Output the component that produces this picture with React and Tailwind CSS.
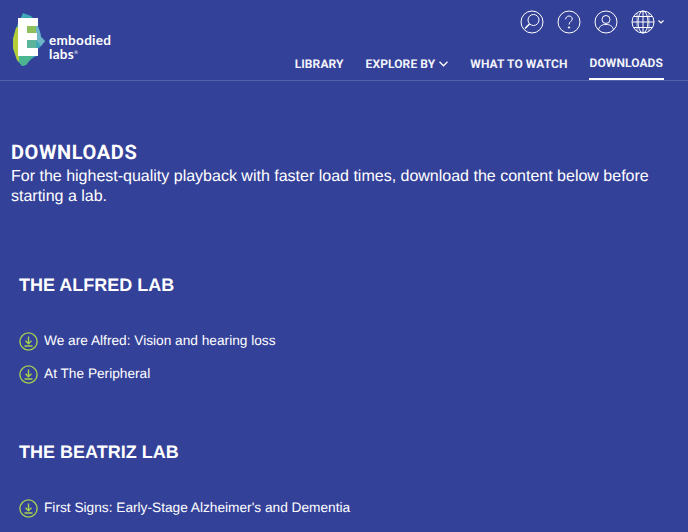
const navFont = { fontFamily: '"Roboto", "Liberation Sans", sans-serif' };

const Logo = () => (
  <div className="flex items-end">
    <svg width="36" height="56" viewBox="0 0 36 56" className="shrink-0">
      <path d="M11 1 L19 4 L24 9 L28 20 L29 25 L33 29 L29 34 L25 38 L24 44 L18 48 L14 53 L10 54 L5 48 L1 36 L1 27 L4 16 Z" fill="#3fa9b8" />
      <path d="M4 16 L1 27 L1 36 L5 48 L7 50 L7 14 Z" fill="#b4cc3a" />
      <path d="M7 44 L7 50 L10 54 L14 53 L18 48 L21 44 Z" fill="#4bb58f" />
      <path d="M14 13 H25 V21 H14 Z" fill="#8fbf5a" />
      <path d="M14 28 H24 V37 H14 Z" fill="#5cb59a" />
      <path d="M24 9 L28 20 L29 25 L33 29 L29 34 L24 28 Z" fill="#6fb5c9" />
      <path d="M6 6 H26 V14 H15 V21 H25 V28 H15 V36 H26 V44 H6 Z" fill="#ffffff" />
    </svg>
    <div className="mb-[7px] ml-[1px] text-[13.5px] leading-[14px] font-bold tracking-[0.3px] text-white" style={{ fontFamily: '"Lato", sans-serif' }}>
      <div>embodied</div>
      <div className="flex">labs<span className="text-[5px] leading-[12px] text-[#c5cce6]">®</span></div>
    </div>
  </div>
);

const Circle = ({ children }) => (
  <svg width="24" height="24" viewBox="0 0 24 24" fill="none" stroke="#ffffff" strokeWidth="1">
    <circle cx="12" cy="12" r="11" />
    {children}
  </svg>
);

const HeaderIcons = () => (
  <div className="flex items-center gap-[13px] pr-[24px]">
    <Circle>
      <circle cx="13.5" cy="10" r="5.5" />
      <path d="M9.5 14 L5 18.5" strokeWidth="1.6" />
    </Circle>
    <Circle>
      <path d="M8.7 9.3 C8.7 7.2 10.2 6 12 6 C13.9 6 15.3 7.2 15.3 9 C15.3 11.3 12 11.6 12 14.5" />
      <circle cx="12" cy="17.5" r="0.7" fill="#ffffff" />
    </Circle>
    <Circle>
      <circle cx="12" cy="9.5" r="4" />
      <path d="M4.5 20 C5.5 15.5 8.5 14.5 12 14.5 C15.5 14.5 18.5 15.5 19.5 20" />
    </Circle>
    <div className="flex items-center gap-[3px]">
      <svg width="24" height="24" viewBox="0 0 24 24" fill="none" stroke="#ffffff" strokeWidth="1">
        <circle cx="12" cy="12" r="11" />
        <ellipse cx="12" cy="12" rx="5" ry="11" />
        <path d="M12 1 V23 M1 12 H23 M2.6 6.5 H21.4 M2.6 17.5 H21.4" />
        <path d="M6 2.8 V21.2 M18 2.8 V21.2" strokeWidth="0.6" />
      </svg>
      <svg width="6" height="4" viewBox="0 0 6 4" fill="none" stroke="#ffffff" strokeWidth="1.2">
        <path d="M0.5 0.5 L3 3 L5.5 0.5" />
      </svg>
    </div>
  </div>
);

const NavLink = ({ children, active }) => (
  <div className={`flex h-[33px] items-center px-px text-[12px] font-bold tracking-[0.1px] text-[#f2f3fa] ${active ? 'border-b-2 border-white' : ''}`}>
    {children}
  </div>
);

const DownloadIcon = () => (
  <svg width="19" height="19" viewBox="0 0 19 19" fill="none" stroke="#a5cf4e" strokeWidth="1.4" className="shrink-0">
    <circle cx="9.5" cy="9.5" r="8.6" />
    <path d="M9.5 4.5 V11.5 M6.5 8.8 L9.5 11.8 L12.5 8.8 M5.5 14 H13.5" />
  </svg>
);

const Item = ({ children }) => (
  <div className="flex h-[33px] items-center gap-[6px]">
    <DownloadIcon />
    <span>{children}</span>
  </div>
);

export default function App() {
  return (
    <div className="h-[532px] w-[688px] overflow-hidden bg-[#344199] text-white [text-rendering:geometricPrecision]" style={{ fontFamily: '"Liberation Sans", Arial, sans-serif' }}>
      <header className="flex h-[81px] justify-between border-b border-[#5561ab] pl-[12px]">
        <div className="pt-[12px]">
          <Logo />
        </div>
        <div className="flex flex-col items-end">
          <div className="pt-[10px]">
            <HeaderIcons />
          </div>
          <nav className="mt-auto flex items-center gap-[20px] pr-[24px]" style={navFont}>
            <NavLink>LIBRARY</NavLink>
            <NavLink>
              EXPLORE BY
              <svg width="9" height="6" viewBox="0 0 9 6" fill="none" stroke="#ffffff" strokeWidth="1.3" className="ml-[4px]">
                <path d="M0.5 0.8 L4.5 4.8 L8.5 0.8" />
              </svg>
            </NavLink>
            <NavLink>WHAT TO WATCH</NavLink>
            <NavLink active>DOWNLOADS</NavLink>
          </nav>
        </div>
      </header>

      <main>
        <section className="px-[11px] pt-[59px]">
          <h1 className="text-[20px] leading-[24px] font-bold tracking-[0.6px]" style={navFont}>DOWNLOADS</h1>
          <p className="mt-[3px] text-[16px] leading-[20px]">
            For the highest-quality playback with faster load times, download the content below before starting a lab.
          </p>
        </section>

        <section className="pl-[19px] pt-[66px] text-[13.7px]">
          <h2 className="mb-[28px] text-[18px] leading-[24px] font-bold">THE ALFRED LAB</h2>
          <Item>We are Alfred: Vision and hearing loss</Item>
          <Item>At The Peripheral</Item>
          <h2 className="mt-[49px] mb-[28px] text-[18px] leading-[24px] font-bold">THE BEATRIZ LAB</h2>
          <Item>First Signs: Early-Stage Alzheimer's and Dementia</Item>
        </section>
      </main>
    </div>
  );
}
